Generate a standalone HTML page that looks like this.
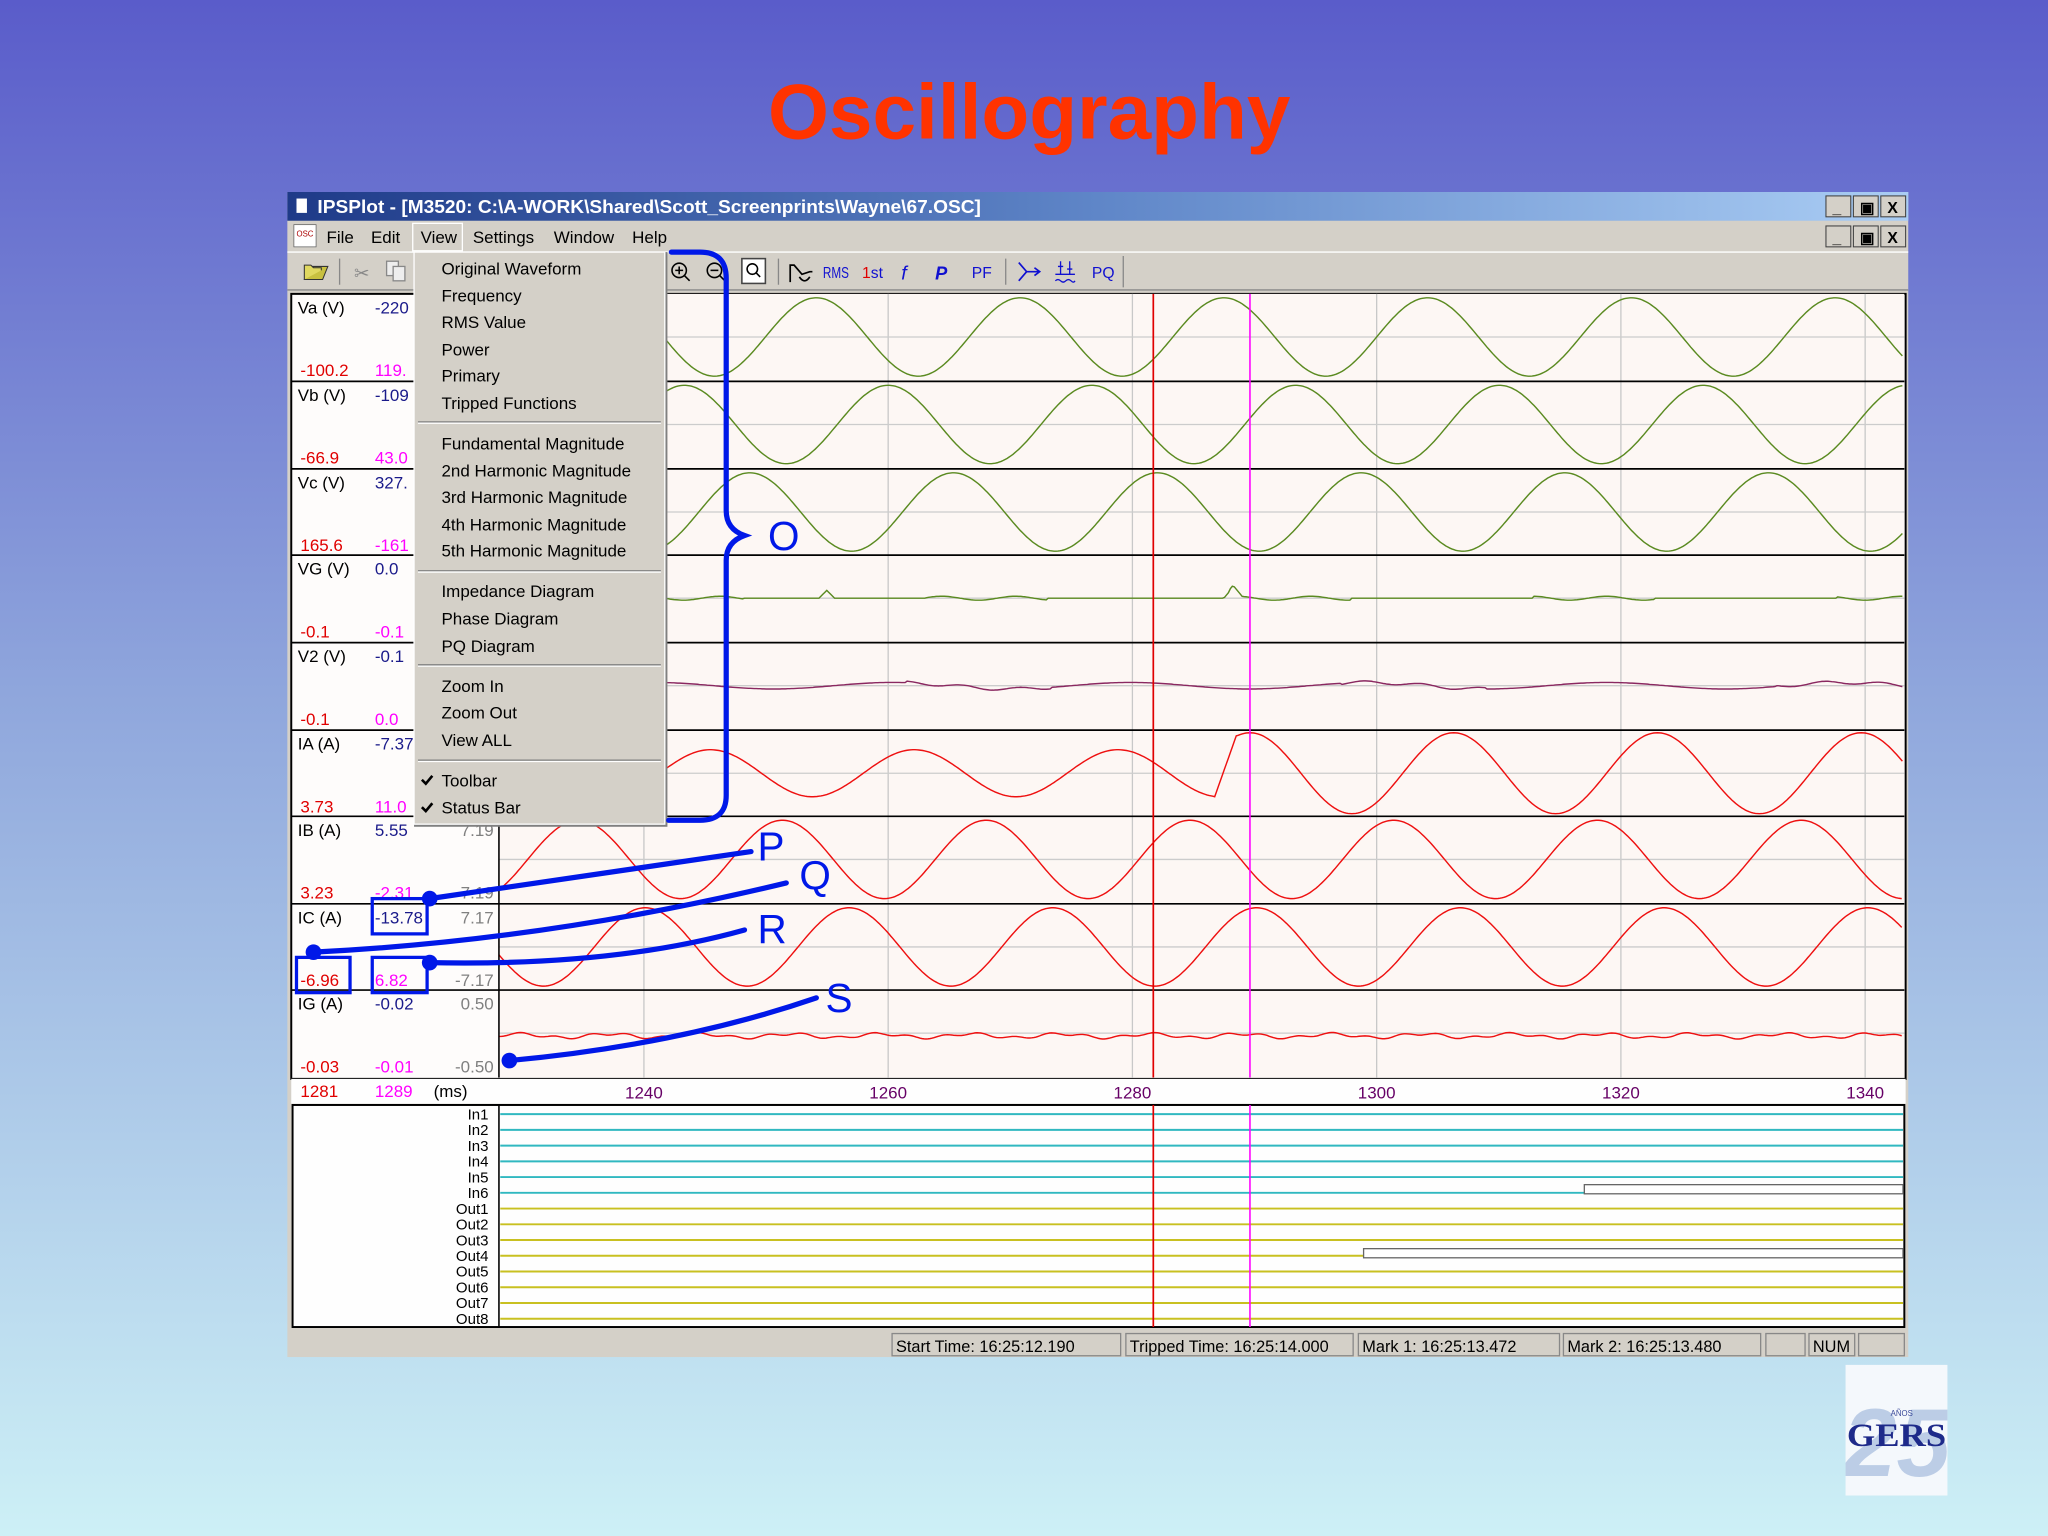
<!DOCTYPE html>
<html><head><meta charset="utf-8"><style>
html,body{margin:0;padding:0;width:2048px;height:1536px;overflow:hidden}
svg{display:block}
text{font-family:"Liberation Sans",sans-serif}
</style></head><body>
<svg id="s" xmlns="http://www.w3.org/2000/svg" width="2048" height="1536" viewBox="0 0 1568 1176">
<defs>
<linearGradient id="bg" x1="0" y1="0" x2="0" y2="1"><stop offset="0" stop-color="#5a5cca"/><stop offset="0.45" stop-color="#8fa6dc"/><stop offset="1" stop-color="#cdf0f6"/></linearGradient>
<linearGradient id="tb" x1="0" y1="0" x2="1" y2="0"><stop offset="0" stop-color="#1e3a88"/><stop offset="0.5" stop-color="#5f86c8"/><stop offset="1" stop-color="#aacdf4"/></linearGradient>
<clipPath id="lg"><rect x="1413" y="1045" width="78" height="100"/></clipPath>
</defs>
<rect width="1568" height="1176" fill="url(#bg)"/>
<text x="788" y="106" text-anchor="middle" font-size="60" font-weight="bold" fill="#ff3300">Oscillography</text>

<rect x="220" y="147" width="1241" height="892" fill="#d4d0c8"/>
<rect x="220" y="147" width="1241" height="22" fill="url(#tb)"/>
<rect x="227" y="152" width="8" height="11" fill="#fff"/>
<text x="243" y="163" font-size="14" font-weight="bold" fill="#fff" textLength="508" lengthAdjust="spacingAndGlyphs">IPSPlot - [M3520: C:\A-WORK\Shared\Scott_Screenprints\Wayne\67.OSC]</text>
<g id="btns"></g>
<rect x="225" y="172" width="17" height="17" fill="#fff" stroke="#666" stroke-width="0.6"/>
<text x="227" y="181" font-size="6" fill="#a00">OSC</text>
<g font-size="13" fill="#000">
<text x="250" y="186">File</text><text x="284" y="186">Edit</text><text x="322" y="186">View</text>
<text x="362" y="186">Settings</text><text x="424" y="186">Window</text><text x="484" y="186">Help</text></g>
<rect x="316" y="171" width="38" height="21" fill="none" stroke="#fff" stroke-width="1"/>
<line x1="220" y1="193" x2="1461" y2="193" stroke="#fff"/>
<path d="M233 214 l4 -10 h14 l-4 10z" fill="#c8c040" stroke="#333" stroke-width="0.8"/>
<path d="M233 214 v-11 h5 l2 2 h6 v2" fill="#e0d860" stroke="#333" stroke-width="0.8"/>
<line x1="260" y1="198" x2="260" y2="218" stroke="#888"/>
<text x="271" y="214" font-size="14" fill="#888">✂</text>
<rect x="296" y="200" width="9" height="11" fill="#eee" stroke="#888"/><rect x="301" y="204" width="9" height="11" fill="#eee" stroke="#888"/>
<g fill="none" stroke="#000" stroke-width="1.2">
<circle cx="520" cy="207" r="5.5"/><line x1="524" y1="211" x2="528" y2="215"/><path d="M517 207h6M520 204v6"/>
<circle cx="547" cy="207" r="5.5"/><line x1="551" y1="211" x2="555" y2="215"/><path d="M544 207h6"/>
<rect x="568" y="198" width="18" height="19" fill="#fff" stroke="#444"/><circle cx="576" cy="206" r="4"/><line x1="579" y1="209" x2="582" y2="212"/>
</g>
<line x1="596" y1="198" x2="596" y2="218" stroke="#888"/>
<path d="M605 216v-13h3l6 7 l6-2h2 M612 212 q4 6 8 0" fill="none" stroke="#000" stroke-width="1.3"/>
<g font-size="12" fill="#1010d0">
<text x="630" y="213" textLength="20" lengthAdjust="spacingAndGlyphs">RMS</text><text x="660" y="213"><tspan fill="#e00000">1</tspan>st</text>
<text x="690" y="214" font-style="italic" font-size="15">f</text><text x="716" y="214" font-style="italic" font-weight="bold" font-size="14">P</text>
<text x="744" y="213">PF</text><text x="836" y="213">PQ</text></g>
<line x1="770" y1="198" x2="770" y2="218" stroke="#888"/>
<path d="M780 201 l6 7 h10 M786 208 l-6 7 M792 205 l4 3 -4 3" fill="none" stroke="#1010d0" stroke-width="1.3"/>
<path d="M808 210h15 M812 200v10 M819 200v10 M810 204h4 M817 206h4 M808 215q2-2 4 0t4 0t4 0t3 0" fill="none" stroke="#1010d0" stroke-width="1"/>
<line x1="860" y1="196" x2="860" y2="220" stroke="#888"/>
<line x1="220" y1="222" x2="1461" y2="222" stroke="#888"/>

<rect x="223" y="225" width="1236" height="601" fill="#fefcfb" stroke="#000" stroke-width="1.5"/>
<rect x="382" y="225" width="1076" height="600" fill="#fdf7f4"/>
<g id="grid"></g>
<g id="waves"></g>
<line x1="382" y1="225" x2="382" y2="825" stroke="#000" stroke-width="1.2"/>
<line x1="883" y1="225" x2="883" y2="825" stroke="#e00000" stroke-width="1.3"/>
<line x1="957" y1="225" x2="957" y2="825" stroke="#ff00ff" stroke-width="1.2"/>
<g id="labels" font-size="13"></g>
<rect x="223" y="826" width="1236" height="19" fill="#fefefe"/>
<g font-size="13"><text x="230" y="840" fill="#e00000">1281</text><text x="287" y="840" fill="#ff00ff">1289</text><text x="332" y="840" fill="#000">(ms)</text>
<g fill="#660066" text-anchor="middle"><text x="493" y="841">1240</text><text x="680" y="841">1260</text><text x="867" y="841">1280</text><text x="1054" y="841">1300</text><text x="1241" y="841">1320</text><text x="1428" y="841">1340</text></g></g>
<rect x="224" y="846" width="1234" height="170" fill="#fefefe" stroke="#000" stroke-width="1.5"/>
<line x1="382" y1="846" x2="382" y2="1016" stroke="#000" stroke-width="1.2"/>
<g id="dig" font-size="11.5"></g>
<line x1="883" y1="846" x2="883" y2="1016" stroke="#e00000" stroke-width="1.3"/>
<line x1="957" y1="846" x2="957" y2="1016" stroke="#ff00ff" stroke-width="1.2"/>
<g fill="none" stroke="#888" stroke-width="1">
<rect x="683" y="1021" width="175" height="17"/><rect x="862" y="1021" width="174" height="17"/><rect x="1040" y="1021" width="154" height="17"/>
<rect x="1197" y="1021" width="151" height="17"/><rect x="1352" y="1021" width="30" height="17"/><rect x="1385" y="1021" width="35" height="17"/><rect x="1423" y="1021" width="35" height="17"/></g>
<g font-size="12.5" fill="#000"><text x="686" y="1035">Start Time:  16:25:12.190</text><text x="865" y="1035">Tripped Time:  16:25:14.000</text>
<text x="1043" y="1035">Mark 1:  16:25:13.472</text><text x="1200" y="1035">Mark 2:  16:25:13.480</text><text x="1388" y="1035">NUM</text></g>

<rect x="317" y="193" width="194" height="440" fill="#808080"/>
<rect x="317" y="193" width="192" height="438" fill="#d4d0c8" stroke="#fff" stroke-width="1"/>
<g id="menu" font-size="13" fill="#000"></g>

<g fill="none" stroke="#0018e8" stroke-width="4" stroke-linecap="round">
<path d="M514 193 h22 q20 0 20 20 v178 q0 14 14 19 q-14 5 -14 19 v180 q0 19 -20 19 h-24"/>
<path d="M329 688 L575 652"/><path d="M240 729 Q420 720 602 676"/><path d="M329 737 Q470 740 570 712"/><path d="M390 812 Q520 800 625 764"/>
<rect x="285" y="688" width="42" height="27" stroke-width="2.5"/><rect x="227" y="733" width="41" height="27" stroke-width="2.5"/><rect x="285" y="733" width="42" height="27" stroke-width="2.5"/>
</g>
<g fill="#0018e8"><circle cx="329" cy="688" r="6"/><circle cx="240" cy="729" r="6"/><circle cx="329" cy="737" r="6"/><circle cx="390" cy="812" r="6"/></g>
<g font-size="31" fill="#0018e8"><text x="588" y="421">O</text><text x="580" y="659">P</text><text x="612" y="681">Q</text><text x="580" y="722">R</text><text x="632" y="775">S</text></g>

<rect x="1413" y="1045" width="78" height="100" fill="#f4f8fc"/>
<g clip-path="url(#lg)"><text x="1452" y="1130" text-anchor="middle" font-size="74" font-weight="bold" fill="#bccde6" font-style="italic">25</text></g>
<text x="1456" y="1084" text-anchor="middle" font-size="6" fill="#3a4a9a">AÑOS</text>
<text x="1452" y="1107" text-anchor="middle" font-size="25" font-weight="bold" fill="#1e2a8a" style="font-family:'Liberation Serif',serif" textLength="76" lengthAdjust="spacingAndGlyphs">GERS</text>
</svg>
<script>
const NS="http://www.w3.org/2000/svg";
function el(p,t,a,txt){const e=document.createElementNS(NS,t);for(const k in a)e.setAttribute(k,a[k]);if(txt!=null)e.textContent=txt;document.getElementById(p).appendChild(e);return e;}
[[1398,150],[1398,173]].forEach(([x,y])=>{[0,21,42].forEach((dx,i)=>{el('btns','rect',{x:x+dx,y:y,width:19,height:16,fill:'#d4d0c8',stroke:'#404040','stroke-width':0.8});el('btns','text',{x:x+dx+5,y:y+13,'font-size':12,'font-weight':'bold',fill:'#000'},['_','▣','X'][i]);});});
const T=[225,292,359,425,492,559,625,692,758,825];
[493,680,867,1054,1241,1428].forEach(x=>el('grid','line',{x1:x,y1:225,x2:x,y2:825,stroke:'#c8c8c8','stroke-width':1}));
for(let i=0;i<9;i++){el('grid','line',{x1:382,y1:T[i]+33,x2:1458,y2:T[i]+33,stroke:'#cccccc'});if(i>0)el('grid','line',{x1:223,y1:T[i],x2:1458,y2:T[i],stroke:'#000','stroke-width':1.3});}
function poly(fn,x0,x1,color,w){let d='';for(let x=x0;x<=x1;x+=1.5){d+=(d?'L':'M')+x.toFixed(1)+' '+fn(x).toFixed(1);}el('waves','path',{d:d,fill:'none',stroke:color,'stroke-width':w||1.1});}
const P=156,g='#5a8a20',r='#ee1010';
function sine(yc,amp,pk){return x=>yc-amp*Math.cos(2*Math.PI*(x-pk)/P);}
poly(sine(258,30,625),510,1457,g);
poly(sine(325,30,680),510,1457,g);
poly(sine(392,30,574),510,1457,g);
poly(x=>458+(Math.abs(x-633)<6?-(6-Math.abs(x-633)):0)+(Math.abs(x-944)<7?-(7-Math.abs(x-944))*1.2:0)+1.5*Math.sin(x/9)*(Math.sin(x/37)>0.3?1:0),510,1457,g);
poly(x=>525+2.5*Math.sin(x/29)+1.2*Math.sin(x/7)*(Math.sin(x/53)>0.5?1:0),510,1457,'#8a2860');
poly(x=>{if(x<930)return 592-18*Math.cos(2*Math.PI*(x-544)/P);if(x<947)return 610-(x-930)/17*48;return 592-31*Math.cos(2*Math.PI*(x-957)/P);},510,1457,r);
poly(sine(658,30,443),382,1457,r);
poly(sine(725,30,494),382,1457,r);
poly(x=>793+1.5*Math.sin(x/11)+1*Math.sin(x/4.3),382,1457,r);
const L=[['Va (V)','-220','','-100.2','119.',''],['Vb (V)','-109','','-66.9','43.0',''],['Vc (V)','327.','','165.6','-161',''],['VG (V)','0.0','','-0.1','-0.1',''],['V2 (V)','-0.1','','-0.1','0.0',''],['IA (A)','-7.37','','3.73','11.0',''],['IB (A)','5.55','7.19','3.23','-2.31','7.19'],['IC (A)','-13.78','7.17','-6.96','6.82','-7.17'],['IG (A)','-0.02','0.50','-0.03','-0.01','-0.50']];
L.forEach((l,i)=>{const y=T[i];el('labels','text',{x:228,y:y+15,fill:'#000'},l[0]);el('labels','text',{x:287,y:y+15,fill:'#1a1a8a'},l[1]);
if(l[2])el('labels','text',{x:378,y:y+15,fill:'#808080','text-anchor':'end'},l[2]);
el('labels','text',{x:230,y:y+63,fill:'#e00000'},l[3]);el('labels','text',{x:287,y:y+63,fill:'#ff00ff'},l[4]);
if(l[5])el('labels','text',{x:378,y:y+63,fill:'#808080','text-anchor':'end'},l[5]);});
const D=['In1','In2','In3','In4','In5','In6','Out1','Out2','Out3','Out4','Out5','Out6','Out7','Out8'];
D.forEach((n,i)=>{const y=853+i*12.05;el('dig','text',{x:374,y:y+4,'text-anchor':'end',fill:'#000'},n);
el('dig','line',{x1:383,y1:y,x2:1457,y2:y,stroke:i<6?'#30b8c0':'#c8c020','stroke-width':1.5});});
el('dig','rect',{x:1213,y:907,width:244,height:7,fill:'#fff',stroke:'#666'});
el('dig','rect',{x:1044,y:956,width:413,height:7,fill:'#fff',stroke:'#666'});
const M=[['Original Waveform',205],['Frequency',226],['RMS Value',246],['Power',267],['Primary',287],['Tripped Functions',308],[null,323],['Fundamental Magnitude',339],['2nd Harmonic Magnitude',360],['3rd Harmonic Magnitude',380],['4th Harmonic Magnitude',401],['5th Harmonic Magnitude',421],[null,437],['Impedance Diagram',452],['Phase Diagram',473],['PQ Diagram',494],[null,509],['Zoom In',525],['Zoom Out',545],['View ALL',566],[null,582],['Toolbar',597],['Status Bar',618]];
M.forEach(([t,y])=>{if(!t){el('menu','line',{x1:320,y1:y,x2:506,y2:y,stroke:'#808080'});el('menu','line',{x1:320,y1:y+1,x2:506,y2:y+1,stroke:'#fff'});}else el('menu','text',{x:338,y:y+5},t);});
[597,618].forEach(y=>el('menu','path',{d:`M323 ${y} l3 3 l5 -6`,fill:'none',stroke:'#000','stroke-width':2}));
</script>
</body></html>
